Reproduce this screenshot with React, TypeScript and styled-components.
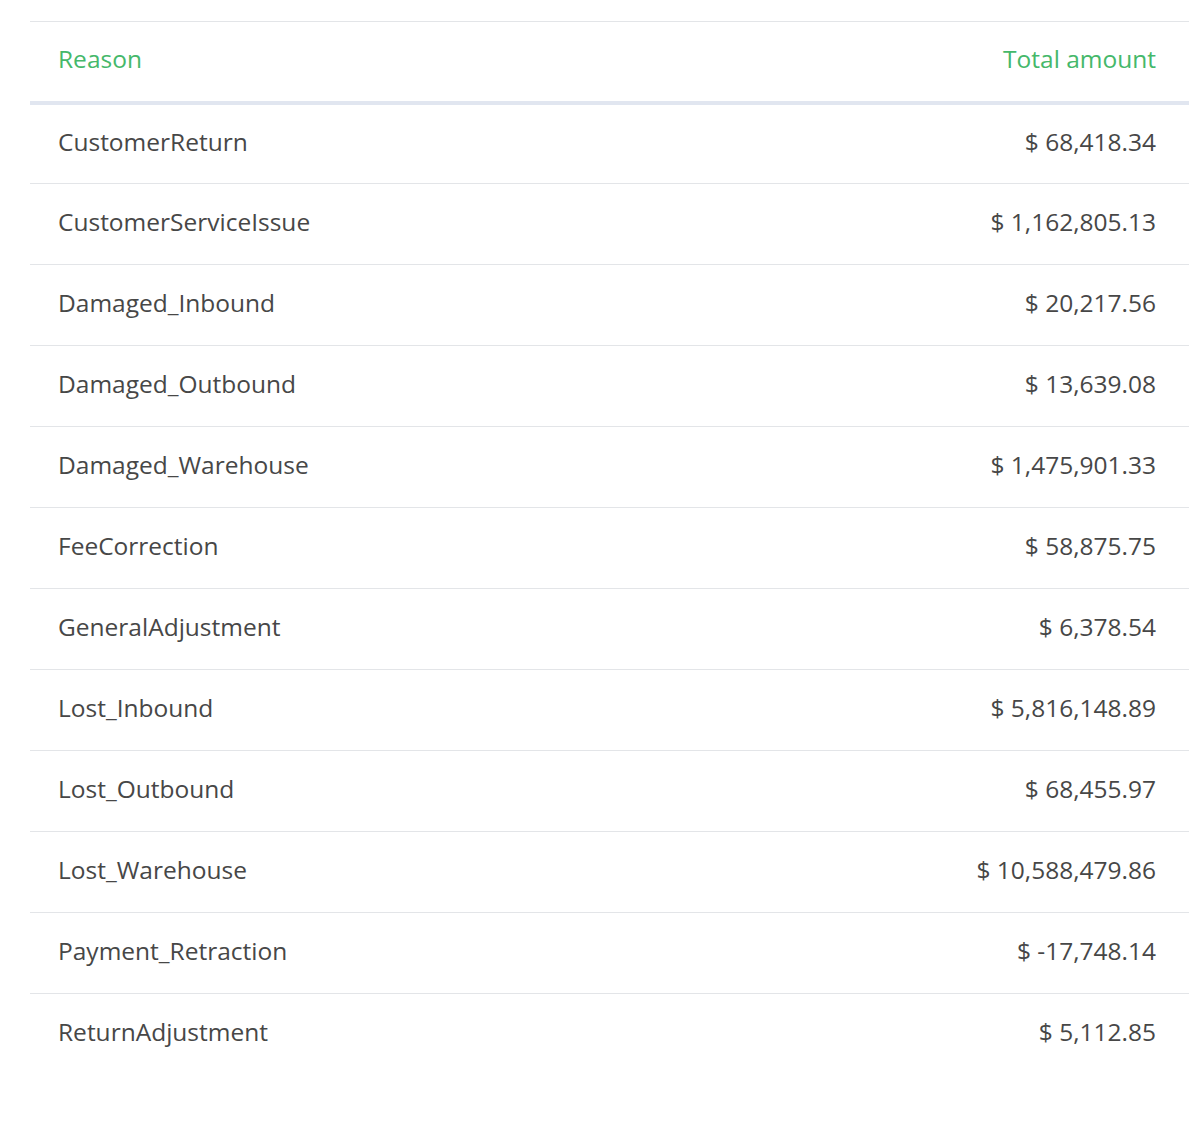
import React from "react";
import styled, { createGlobalStyle } from "styled-components";

const Global = createGlobalStyle`
  body { margin: 0; background: #fff; font-family: "Open Sans", "Noto Sans", sans-serif; }
`;

const Wrap = styled.div`
  padding: 21px 11px 0 30px;
`;

const Table = styled.table`
  width: 100%;
  border-collapse: collapse;
  border-top: 1px solid #e3e5e8;
  font-size: 24.5px;
`;

const Th = styled.th<{ $right?: boolean }>`
  height: 81px;
  box-sizing: border-box;
  padding: 0 33px 5px 28px;
  text-align: ${(p) => (p.$right ? "right" : "left")};
  font-weight: 400;
  color: #45b86a;
  border-bottom: 4px solid #e1e6f0;
`;

const Tr = styled.tr`
  & + & td { border-top: 1px solid #e3e5e8; }
`;

const Td = styled.td<{ $right?: boolean }>`
  height: 81px;
  box-sizing: border-box;
  padding: 0 33px 5px 28px;
  text-align: ${(p) => (p.$right ? "right" : "left")};
  color: #474747;
`;

const rows: [string, string][] = [
  ["CustomerReturn", "$ 68,418.34"],
  ["CustomerServiceIssue", "$ 1,162,805.13"],
  ["Damaged_Inbound", "$ 20,217.56"],
  ["Damaged_Outbound", "$ 13,639.08"],
  ["Damaged_Warehouse", "$ 1,475,901.33"],
  ["FeeCorrection", "$ 58,875.75"],
  ["GeneralAdjustment", "$ 6,378.54"],
  ["Lost_Inbound", "$ 5,816,148.89"],
  ["Lost_Outbound", "$ 68,455.97"],
  ["Lost_Warehouse", "$ 10,588,479.86"],
  ["Payment_Retraction", "$ -17,748.14"],
  ["ReturnAdjustment", "$ 5,112.85"],
];

export default function App() {
  return (
    <>
      <Global />
      <Wrap>
        <Table>
          <thead>
            <tr>
              <Th>Reason</Th>
              <Th $right>Total amount</Th>
            </tr>
          </thead>
          <tbody>
            {rows.map(([r, a]) => (
              <Tr key={r}>
                <Td>{r}</Td>
                <Td $right>{a}</Td>
              </Tr>
            ))}
          </tbody>
        </Table>
      </Wrap>
    </>
  );
}
